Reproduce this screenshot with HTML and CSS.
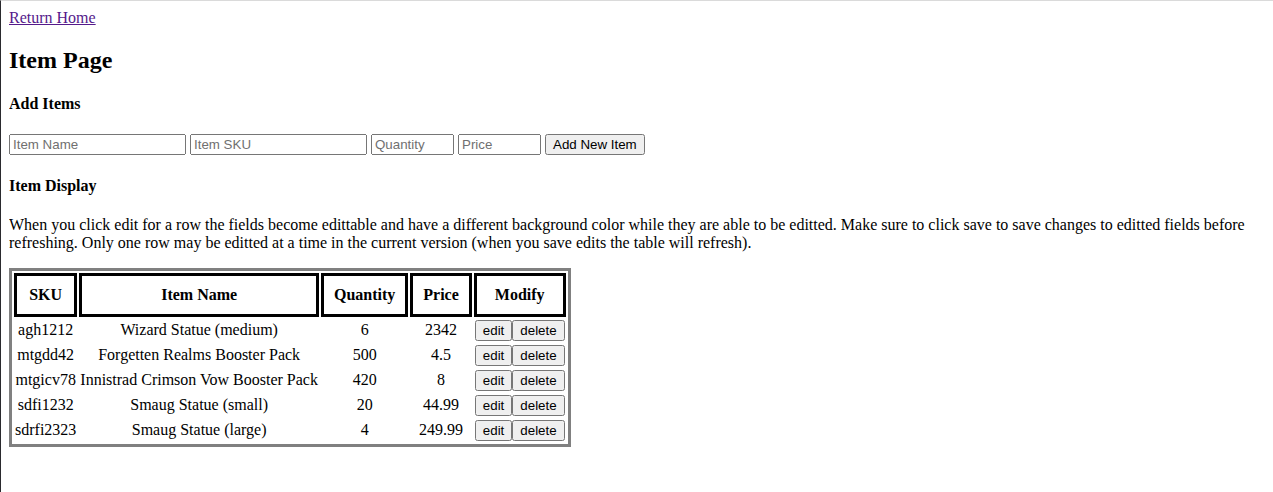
FILE: index.html
```html
<!DOCTYPE html>
<html lang="en">
<head>
<meta charset="utf-8">
<title>Item Page</title>
<link rel="stylesheet" href="styles.css">
</head>
<body>
<a class="home-link" href="#">Return Home</a>
<main class="page">
  <h1 class="page-title">Item Page</h1>
  <h4 class="section-title">Add Items</h4>
  <div class="add-form">
    <input class="field field-wide" type="text" placeholder="Item Name">
    <input class="field field-wide" type="text" placeholder="Item SKU">
    <input class="field field-narrow" type="text" placeholder="Quantity">
    <input class="field field-narrow" type="text" placeholder="Price">
    <button class="btn" type="button">Add New Item</button>
  </div>
  <h4 class="section-title">Item Display</h4>
  <p class="note">When you click edit for a row the fields become edittable and have a different background color while they are able to be editted. Make sure to click save to save changes to editted fields before refreshing. Only one row may be editted at a time in the current version (when you save edits the table will refresh).</p>
  <table class="items">
    <thead>
      <tr><th>SKU</th><th>Item Name</th><th>Quantity</th><th>Price</th><th>Modify</th></tr>
    </thead>
    <tbody>
      <tr><td>agh1212</td><td>Wizard Statue (medium)</td><td>6</td><td>2342</td><td><button class="btn" type="button">edit</button><button class="btn" type="button">delete</button></td></tr>
      <tr><td>mtgdd42</td><td>Forgetten Realms Booster Pack</td><td>500</td><td>4.5</td><td><button class="btn" type="button">edit</button><button class="btn" type="button">delete</button></td></tr>
      <tr><td>mtgicv78</td><td>Innistrad Crimson Vow Booster Pack</td><td>420</td><td>8</td><td><button class="btn" type="button">edit</button><button class="btn" type="button">delete</button></td></tr>
      <tr><td>sdfi1232</td><td>Smaug Statue (small)</td><td>20</td><td>44.99</td><td><button class="btn" type="button">edit</button><button class="btn" type="button">delete</button></td></tr>
      <tr><td>sdrfi2323</td><td>Smaug Statue (large)</td><td>4</td><td>249.99</td><td><button class="btn" type="button">edit</button><button class="btn" type="button">delete</button></td></tr>
    </tbody>
  </table>
</main>
</body>
</html>
```
FILE: styles.css
```css
html {
  border-top: 1px solid #dadada;
  border-left: 1px solid #2a2a2e;
  min-height: 100vh;
  box-sizing: border-box;
}
body {
  margin: 8px;
  font-family: "Liberation Serif", "Times New Roman", serif;
  font-size: 16px;
  color: #000;
}
.home-link {
  color: #551a8b;
}
.page-title {
  font-size: 24px;
  margin: 19.92px 0;
}
.section-title {
  font-size: 16px;
  margin: 21.28px 0;
}
.field, .btn {
  font-family: "Liberation Sans", Arial, sans-serif;
  font-size: 13.333px;
}
.field {
  box-sizing: border-box;
  height: 21px;
}
.field::placeholder {
  color: #707070;
}
.field-wide {
  width: 177px;
}
.field-narrow {
  width: 83px;
}
.note {
  margin: 16px 0;
}
.items {
  border: 3px solid #808080;
  border-spacing: 2px;
}
.items th {
  border: 3px solid #000;
  padding: 10px;
}
.items td {
  padding: 1px;
  text-align: center;
}
```
